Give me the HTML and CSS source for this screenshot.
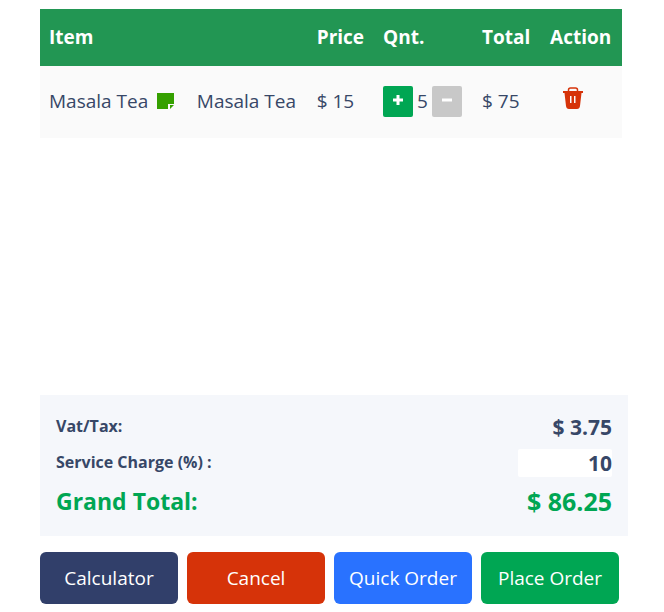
FILE: index.html
```html
<!DOCTYPE html>
<html lang="en">
<head>
<meta charset="utf-8">
<meta name="viewport" content="width=device-width, initial-scale=1">
<title>Order cart</title>
<link rel="stylesheet" href="styles.css">
</head>
<body>
<main class="cart">
  <div class="cart-items">
    <table class="items">
      <colgroup>
        <col class="col-item"><col class="col-variant"><col class="col-price"><col class="col-qty"><col class="col-total"><col class="col-action">
      </colgroup>
      <thead>
        <tr><th colspan="2">Item</th><th>Price</th><th>Qnt.</th><th>Total</th><th>Action</th></tr>
      </thead>
      <tbody>
        <tr>
          <td>
            <div class="item-name">Masala Tea
              <button class="icon-button note" type="button" aria-label="Add note">
                <svg width="17" height="17" viewBox="0 0 17 17"><path fill="#35a000" d="M0 0h17v11h-6v5H0z"/><path fill="#35a000" d="M13 12h4l-4 4z"/></svg>
              </button>
            </div>
          </td>
          <td>Masala Tea</td>
          <td>$ 15</td>
          <td>
            <div class="stepper">
              <button class="step step-plus" type="button" aria-label="Increase quantity"><svg width="12" height="12" viewBox="0 0 12 12"><path d="M6 1v10M1 6h10" stroke="#fff" stroke-width="3"/></svg></button>
              <span>5</span>
              <button class="step step-minus" type="button" aria-label="Decrease quantity"><svg width="12" height="12" viewBox="0 0 12 12"><path d="M1 6h10" stroke="#fff" stroke-width="3"/></svg></button>
            </div>
          </td>
          <td>$ 75</td>
          <td>
            <button class="icon-button trash" type="button" aria-label="Remove item">
              <svg width="20" height="22" viewBox="0 0 20 22"><path d="M5.500 5V3Q5.500 1 7.500 1h5q2 0 2 2v2" fill="none" stroke="#d63309" stroke-width="1.500"/><path fill="#d63309" fill-rule="evenodd" d="M0 4h20v2h-1.500L17 19q-.4 3-3 3H6q-2.600 0-3-3L1.500 6H0zM7 9v7h1.500V9zM11 9v7h1.500V9z"/></svg>
            </button>
          </td>
        </tr>
      </tbody>
    </table>
  </div>

  <section class="summary">
    <div class="summary-row"><span class="label">Vat/Tax:</span><span class="value">$ 3.75</span></div>
    <div class="summary-row"><label class="label" for="service-charge">Service Charge (%) :</label><input class="value charge" id="service-charge" type="text" inputmode="decimal" value="10"></div>
    <div class="summary-row grand"><span class="grand-label">Grand Total:</span><span class="grand-value">$ 86.25</span></div>
  </section>

  <div class="actions">
    <button class="action calculator" type="button">Calculator</button>
    <button class="action cancel" type="button">Cancel</button>
    <button class="action quick" type="button">Quick Order</button>
    <button class="action place" type="button">Place Order</button>
  </div>
</main>
</body>
</html>
```
FILE: styles.css
```css
* {
  box-sizing: border-box;
}

body {
  margin: 0;
  background: #fff;
  color: #374767;
  font-family: "Open Sans", sans-serif;
  font-size: 19px;
  line-height: 26px;
}

button,
input {
  margin: 0;
  padding: 0;
  border: 0;
  font: inherit;
}

button {
  cursor: pointer;
}

svg {
  display: block;
}

.cart {
  display: flex;
  flex-direction: column;
  min-height: 100vh;
  padding: 9px 36px 8px 40px;
}

.cart-items {
  flex: 1;
  padding-right: 6px;
}

.items {
  width: 100%;
  border-collapse: collapse;
  table-layout: fixed;
}

.col-item { width: 25.4%; }
.col-variant { width: 20.6%; }
.col-price { width: 11.4%; }
.col-qty { width: 17%; }
.col-total { width: 11.7%; }
.col-action { width: 13.9%; }

.items th,
.items td {
  padding: 0 0 2px 9px;
  text-align: left;
  white-space: nowrap;
}

.items th {
  height: 57px;
  background: #229653;
  color: #fff;
  font-weight: 700;
}

.items td {
  height: 72px;
  background: #fafafa;
}

.item-name {
  display: flex;
  align-items: center;
  gap: 9px;
}

.icon-button {
  background: none;
}

.trash {
  display: block;
  margin: 0 0 6px 13px;
}

.stepper {
  display: flex;
  align-items: center;
  gap: 4px;
}

.step {
  display: flex;
  justify-content: center;
  width: 30px;
  height: 31px;
  padding-top: 8px;
  border-radius: 2px;
}

.step-plus { background: #00a653; }
.step-minus { background: #c8c8c8; }

.summary {
  display: flex;
  flex-direction: column;
  gap: 8px;
  padding: 18px 16px;
  background: #f5f7fb;
}

.summary-row {
  display: flex;
  align-items: center;
  justify-content: space-between;
  min-height: 28px;
  font-weight: 700;
}

.label {
  padding-bottom: 2px;
  font-size: 16px;
}

.value {
  font-size: 21px;
  font-weight: 700;
}

.charge {
  width: 94px;
  height: 28px;
  border-radius: 2px;
  background: #fff;
  color: inherit;
  text-align: right;
}

.grand {
  min-height: 33px;
  padding-bottom: 2px;
  color: #00a653;
}

.grand-label {
  font-size: 23px;
}

.grand-value {
  font-size: 25px;
}

.actions {
  display: grid;
  grid-template-columns: repeat(4, 1fr);
  gap: 9px;
  margin-top: 16px;
  padding-right: 9px;
}

.action {
  height: 52px;
  border-radius: 6px;
  color: #fff;
}

.calculator { background: #313f6a; }
.cancel { background: #d63309; }
.quick { background: #2972ff; }
.place { background: #00a653; }
```
